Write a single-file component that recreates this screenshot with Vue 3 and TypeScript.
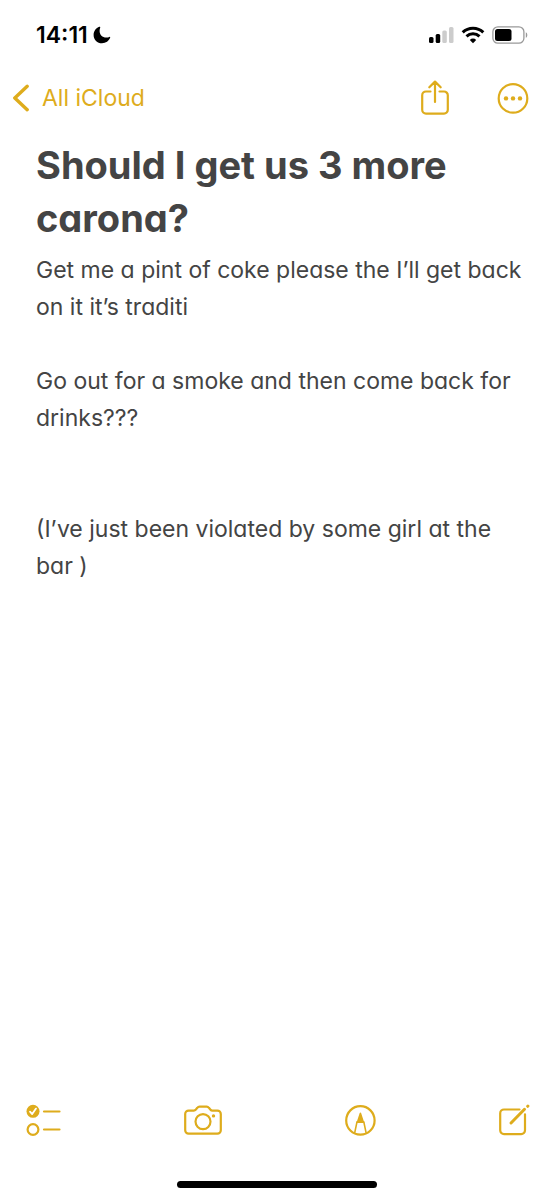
<script setup lang="ts">
interface Paragraph {
  text: string
  blankLinesBefore: number
}

const title = 'Should I get us 3 more carona?'

const paragraphs: Paragraph[] = [
  { text: 'Get me a pint of coke please the I’ll get back on it it’s traditi', blankLinesBefore: 0 },
  { text: 'Go out for a smoke and then come back for drinks???', blankLinesBefore: 1 },
  { text: '(I’ve just been violated by some girl at the bar )', blankLinesBefore: 2 },
]
</script>

<template>
  <div class="screen">
    <header>
      <div class="status">
        <div class="clock">
          <time>14:11</time>
          <svg width="18" height="18" viewBox="0 0 18 18" role="img" aria-label="Do not disturb">
            <path d="M6.3.8C3.100 2 .6 5 .6 9c0 4.700 3.700 8.300 8.400 8.300 3.800 0 7-2.200 8.200-5.700.2-.6-.2-.9-.8-.7-1 .4-2 .6-3.100.6-4 0-6.700-2.700-6.700-6.500 0-1.200.2-2.300.6-3.300.2-.6-.2-1.100-.9-.9z" fill="#000" />
          </svg>
        </div>
        <div class="indicators">
          <svg width="25" height="18" viewBox="0 0 25 18" role="img" aria-label="Signal, 2 of 4 bars">
            <rect x="0" y="11" width="4.500" height="6" rx="1.500" fill="#000" />
            <rect x="6.700" y="8" width="4.500" height="9" rx="1.500" fill="#000" />
            <rect x="13.300" y="4.500" width="4.500" height="12.500" rx="1.500" fill="#ccc" />
            <rect x="20" y="1" width="4.500" height="16" rx="1.500" fill="#ccc" />
          </svg>
          <svg width="24" height="18" viewBox="0 0 24 18" role="img" aria-label="Wi-Fi">
            <g fill="none" stroke="#000" stroke-width="3">
              <path d="M1.700 6.300a14.800 14.800 0 0 1 20.600 0" />
              <path d="M5.500 10.400a9.400 9.400 0 0 1 13 0" />
            </g>
            <path d="M12 17.200l-3.200-3.300a4.600 4.600 0 0 1 6.400 0z" fill="#000" />
          </svg>
          <svg width="36" height="18" viewBox="0 0 36 18" role="img" aria-label="Battery at half">
            <rect x=".9" y=".8" width="31" height="16.400" rx="5" fill="none" stroke="#999" stroke-width="1.300" />
            <rect x="3" y="3" width="16.500" height="12" rx="2.500" fill="#000" />
            <path d="M33.800 6.200c2 .7 2 4.900 0 5.600z" fill="#999" />
          </svg>
        </div>
      </div>

      <nav class="bar">
        <button type="button" class="back">
          <svg width="18" height="28" viewBox="0 0 18 28" aria-hidden="true">
            <path d="M15.200 2.300L2.800 14l12.400 11.700" class="thick" />
          </svg>
          <span>All iCloud</span>
        </button>
        <div class="actions">
          <button type="button" aria-label="Share">
            <svg width="28" height="36" viewBox="0 0 28 36">
              <path d="M9.500 11.500H5a3.800 3.800 0 0 0-3.800 3.800v14.500A3.800 3.800 0 0 0 5 33.600h18a3.800 3.800 0 0 0 3.800-3.800v-14.500a3.800 3.800 0 0 0-3.800-3.800h-4.500M14 22V2M8.300 7.300L14 1.600l5.700 5.700" />
            </svg>
          </button>
          <button type="button" aria-label="More">
            <svg width="32" height="32" viewBox="0 0 32 32">
              <circle cx="16" cy="16.400" r="14.300" />
              <g class="solid">
                <circle cx="9" cy="16.400" r="2.200" />
                <circle cx="16" cy="16.400" r="2.200" />
                <circle cx="23" cy="16.400" r="2.200" />
              </g>
            </svg>
          </button>
        </div>
      </nav>
    </header>

    <main class="note">
      <h1>{{ title }}</h1>
      <p v-for="p in paragraphs" :key="p.text" :class="`gap-${p.blankLinesBefore}`">{{ p.text }}</p>
    </main>

    <footer>
      <div class="tools">
        <button type="button" aria-label="Checklist">
          <svg width="36" height="32" viewBox="0 0 36 32">
            <circle cx="7" cy="7.300" r="6.500" class="solid" />
            <path d="M4 7.600l2.200 2.500L10 4.600" class="tick" />
            <circle cx="7" cy="25.500" r="5.400" />
            <path d="M18 7.500h15.500M18 25.500h15.500" />
          </svg>
        </button>
        <button type="button" aria-label="Camera">
          <svg width="38" height="30" viewBox="0 0 38 30">
            <path d="M4.600 5.600h5.200c.9 0 1.500-.4 2.100-1.100l1.400-1.700c.6-.8 1.200-1.200 2.200-1.200h7.200c1 0 1.600.4 2.200 1.200l1.400 1.700c.6.7 1.200 1.100 2.100 1.100h5a3.400 3.400 0 0 1 3.400 3.400v16.200a3.400 3.400 0 0 1-3.400 3.400H4.600a3.400 3.400 0 0 1-3.400-3.400V9a3.400 3.400 0 0 1 3.400-3.400z" />
            <circle cx="19" cy="16.600" r="7.500" />
            <circle cx="29.500" cy="10.900" r="1.700" class="solid" />
          </svg>
        </button>
        <button type="button" aria-label="Markup">
          <svg width="32" height="32" viewBox="0 0 32 32">
            <circle cx="15.400" cy="16.400" r="14.200" />
            <path d="M9.700 28.800l2.300-11h6.800l2.300 11" class="thin" />
            <path d="M14.600 9.300c.2-1 1.400-1 1.600 0l3.200 9.600h-8z" class="solid" />
          </svg>
        </button>
        <button type="button" aria-label="New note">
          <svg width="31" height="32" viewBox="0 0 31 32">
            <path d="M20.500 5.500H5a3.800 3.800 0 0 0-3.800 3.800v17A3.800 3.800 0 0 0 5 30.100h17.200a3.800 3.800 0 0 0 3.800-3.800V10.300" />
            <path d="M12 19L25.500 5.300" class="pencil" />
            <path d="M28.700 2.300l.2-.2" class="pencil" />
          </svg>
        </button>
      </div>
      <div class="home"></div>
    </footer>
  </div>
</template>

<style>
body {
  margin: 0;
  background: #fff;
}
</style>

<style scoped>
.screen {
  --gold: #deac1c;
  box-sizing: border-box;
  min-height: 100vh;
  display: flex;
  flex-direction: column;
  background: #fff;
  color: #444;
  font-family: Inter, "Liberation Sans", sans-serif;
  font-size: 23px;
}

svg {
  display: block;
}

.status {
  display: flex;
  align-items: center;
  justify-content: space-between;
  height: 70px;
  padding: 0 26px 0 36px;
  color: #000;
}

.clock,
.indicators {
  display: flex;
  align-items: center;
}

.clock {
  gap: 5px;
  font-weight: 600;
}

.indicators {
  gap: 7px;
}

.bar {
  display: flex;
  align-items: center;
  justify-content: space-between;
  height: 56px;
  padding: 0 25px 0 12px;
}

button {
  padding: 0;
  border: 0;
  background: none;
  color: var(--gold);
  font: inherit;
  cursor: pointer;
}

button svg {
  fill: none;
  stroke: currentColor;
  stroke-width: 2.2;
  stroke-linecap: round;
  stroke-linejoin: round;
}

.back {
  display: flex;
  align-items: center;
  gap: 12px;
}

.actions {
  display: flex;
  align-items: center;
  gap: 48px;
}

.thick {
  stroke-width: 3.4;
}

.thin {
  stroke-width: 1.6;
}

.solid {
  fill: currentColor;
  stroke: none;
}

.tick {
  stroke: #fff;
  stroke-width: 1.8;
}

.pencil {
  stroke-width: 3;
}

.note {
  flex: 1;
  padding: 13px 24px 0 36px;
  font-feature-settings: "cv11";
}

h1 {
  margin: 0 0 7px;
  font-size: 38px;
  line-height: 53px;
  font-weight: 700;
}

p {
  margin: 0;
  line-height: 37px;
}

.gap-1 {
  margin-top: 37px;
}

.gap-2 {
  margin-top: 74px;
}

.tools {
  display: flex;
  align-items: center;
  justify-content: space-between;
  height: 60px;
  padding: 0 24px 0 26px;
}

.home {
  width: 36%;
  height: 7px;
  margin: 31px auto 12px;
  border-radius: 4px;
  background: #000;
}
</style>
